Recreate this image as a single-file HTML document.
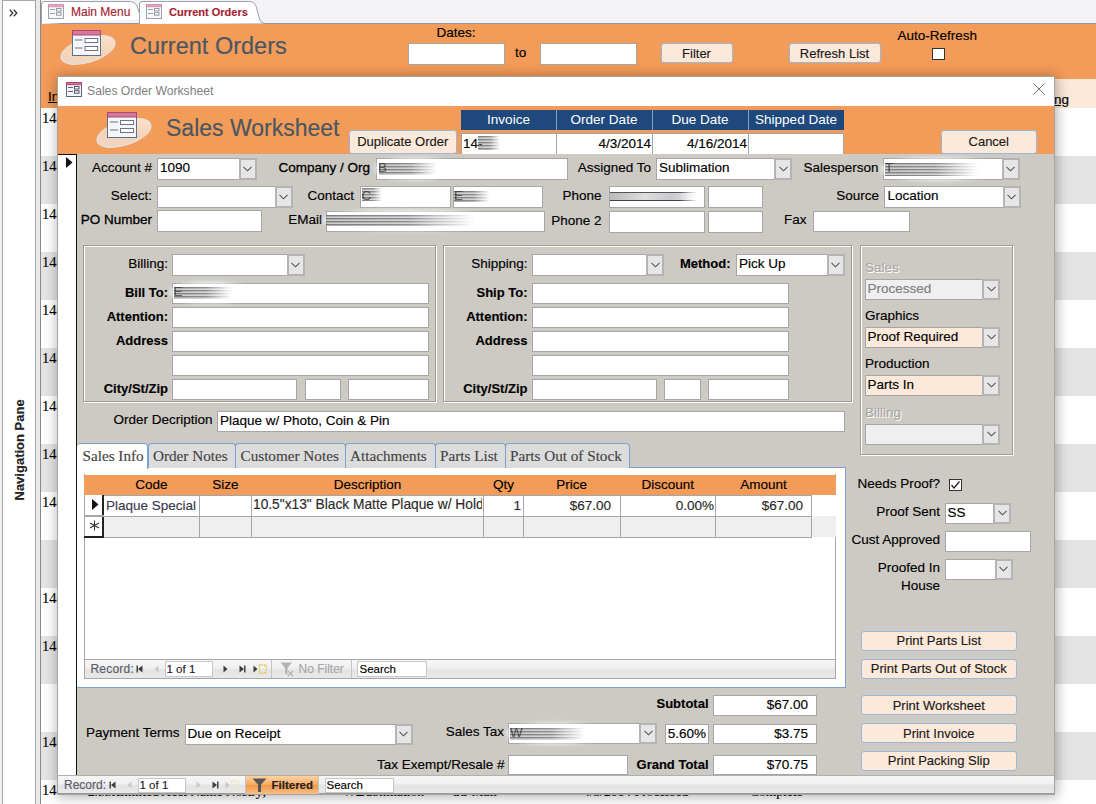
<!DOCTYPE html><html><head><meta charset="utf-8"><style>
html,body{margin:0;padding:0;}
body{width:1096px;height:804px;position:relative;overflow:hidden;background:#fff;font-family:"Liberation Sans",sans-serif;}
div{position:absolute;}
.t{white-space:nowrap;-webkit-text-stroke:0.15px currentColor;}
.n{white-space:nowrap;}
</style></head><body>
<div style="left:41px;top:108px;width:1055px;height:48px;background:#ffffff;"></div>
<div style="left:41px;top:156px;width:1055px;height:48px;background:#e4e4e4;"></div>
<div style="left:41px;top:204px;width:1055px;height:48px;background:#ffffff;"></div>
<div style="left:41px;top:252px;width:1055px;height:48px;background:#e4e4e4;"></div>
<div style="left:41px;top:300px;width:1055px;height:48px;background:#ffffff;"></div>
<div style="left:41px;top:348px;width:1055px;height:48px;background:#e4e4e4;"></div>
<div style="left:41px;top:396px;width:1055px;height:48px;background:#ffffff;"></div>
<div style="left:41px;top:444px;width:1055px;height:48px;background:#e4e4e4;"></div>
<div style="left:41px;top:492px;width:1055px;height:48px;background:#ffffff;"></div>
<div style="left:41px;top:540px;width:1055px;height:48px;background:#e4e4e4;"></div>
<div style="left:41px;top:588px;width:1055px;height:48px;background:#ffffff;"></div>
<div style="left:41px;top:636px;width:1055px;height:48px;background:#e4e4e4;"></div>
<div style="left:41px;top:684px;width:1055px;height:48px;background:#ffffff;"></div>
<div style="left:41px;top:732px;width:1055px;height:48px;background:#e4e4e4;"></div>
<div style="left:41px;top:780px;width:1055px;height:48px;background:#ffffff;"></div>
<div class="t" style="left:42.0px;top:110.86px;width:600px;font-size:14.5px;line-height:14.5px;font-weight:normal;color:#000;font-family:'Liberation Serif', serif;">14-</div>
<div class="t" style="left:42.0px;top:158.86px;width:600px;font-size:14.5px;line-height:14.5px;font-weight:normal;color:#000;font-family:'Liberation Serif', serif;">14-</div>
<div class="t" style="left:42.0px;top:206.86px;width:600px;font-size:14.5px;line-height:14.5px;font-weight:normal;color:#000;font-family:'Liberation Serif', serif;">14-</div>
<div class="t" style="left:42.0px;top:254.86px;width:600px;font-size:14.5px;line-height:14.5px;font-weight:normal;color:#000;font-family:'Liberation Serif', serif;">14-</div>
<div class="t" style="left:42.0px;top:302.86px;width:600px;font-size:14.5px;line-height:14.5px;font-weight:normal;color:#000;font-family:'Liberation Serif', serif;">14-</div>
<div class="t" style="left:42.0px;top:350.86px;width:600px;font-size:14.5px;line-height:14.5px;font-weight:normal;color:#000;font-family:'Liberation Serif', serif;">14-</div>
<div class="t" style="left:42.0px;top:398.86px;width:600px;font-size:14.5px;line-height:14.5px;font-weight:normal;color:#000;font-family:'Liberation Serif', serif;">14-</div>
<div class="t" style="left:42.0px;top:446.86px;width:600px;font-size:14.5px;line-height:14.5px;font-weight:normal;color:#000;font-family:'Liberation Serif', serif;">14-</div>
<div class="t" style="left:42.0px;top:494.86px;width:600px;font-size:14.5px;line-height:14.5px;font-weight:normal;color:#000;font-family:'Liberation Serif', serif;">14-</div>
<div class="t" style="left:42.0px;top:590.86px;width:600px;font-size:14.5px;line-height:14.5px;font-weight:normal;color:#000;font-family:'Liberation Serif', serif;">14-</div>
<div class="t" style="left:42.0px;top:638.86px;width:600px;font-size:14.5px;line-height:14.5px;font-weight:normal;color:#000;font-family:'Liberation Serif', serif;">14-</div>
<div class="t" style="left:42.0px;top:734.86px;width:600px;font-size:14.5px;line-height:14.5px;font-weight:normal;color:#000;font-family:'Liberation Serif', serif;">14-</div>
<div class="t" style="left:42.0px;top:782.86px;width:600px;font-size:14.5px;line-height:14.5px;font-weight:normal;color:#000;font-family:'Liberation Serif', serif;">14-</div>
<div class="t" style="left:88.0px;top:784.69px;width:600px;font-size:13.5px;line-height:13.5px;font-weight:normal;color:#000;font-family:'Liberation Serif', serif;">2xxx</div>
<div class="t" style="left:116.0px;top:784.69px;width:600px;font-size:13.5px;line-height:13.5px;font-weight:normal;color:#000;font-family:'Liberation Serif', serif;">Limited Acct Name Nostry;</div>
<div class="t" style="left:343.0px;top:784.69px;width:600px;font-size:13.5px;line-height:13.5px;font-weight:normal;color:#000;font-family:'Liberation Serif', serif;">W2</div>
<div class="t" style="left:358.0px;top:784.69px;width:600px;font-size:13.5px;line-height:13.5px;font-weight:normal;color:#000;font-family:'Liberation Serif', serif;">Sublimation</div>
<div class="t" style="left:453.0px;top:784.69px;width:600px;font-size:13.5px;line-height:13.5px;font-weight:normal;color:#000;font-family:'Liberation Serif', serif;">SS Mail</div>
<div class="t" style="left:583.0px;top:784.69px;width:600px;font-size:13.5px;line-height:13.5px;font-weight:normal;color:#000;font-family:'Liberation Serif', serif;">4/3/2014 Processed</div>
<div class="t" style="left:750.0px;top:784.69px;width:600px;font-size:13.5px;line-height:13.5px;font-weight:normal;color:#000;font-family:'Liberation Serif', serif;">Complete</div>
<div style="left:41px;top:79px;width:1055px;height:29px;background:#fde9d9;"></div>
<div style="left:41px;top:79px;width:16px;height:29px;background:#f39b58;"></div>
<div class="t" style="left:48.0px;top:89.57px;width:600px;font-size:13.5px;line-height:13.5px;font-weight:normal;color:#000;font-family:'Liberation Sans', sans-serif;"><u>In</u></div>
<div class="t" style="left:1054.0px;top:92.57px;width:600px;font-size:13.5px;line-height:13.5px;font-weight:normal;color:#000;font-family:'Liberation Sans', sans-serif;"><u>ng</u></div>
<div style="left:41px;top:24px;width:1055px;height:55px;background:#f39b58;"></div>
<div style="left:41px;top:0px;width:1055px;height:23px;background:#f3f3f5;"></div>
<div style="left:41px;top:23px;width:1055px;height:1px;background:#8d97a3;"></div>
<div style="left:0px;top:0px;width:41px;height:804px;background:#f0f0f0;"></div>
<div style="left:2px;top:0px;width:34px;height:804px;background:#fff;box-sizing:border-box;border-left:1px solid #a3a3a3;border-right:1px solid #a3a3a3;border-top:1px solid #a8a8a8;"></div>
<div style="left:36px;top:0px;width:5px;height:804px;background:#e9e9e9;box-sizing:border-box;border-right:1px solid #8a8a8a;"></div>
<svg style="position:absolute;left:9px;top:9px" width="9" height="8" viewBox="0 0 9 8"><path d="M0.8 0.8 L3.8 4 L0.8 7.2 M4.8 0.8 L7.8 4 L4.8 7.2" fill="none" stroke="#333" stroke-width="1.3"/></svg>
<div class="t" style="left:-31px;top:443px;width:101px;height:14px;font-size:13px;line-height:14px;font-weight:bold;color:#222;transform:rotate(-90deg);text-align:center;">Navigation Pane</div>
<svg style="position:absolute;left:40px;top:0px" width="225" height="24" viewBox="0 0 225 24"><path d="M1.5 24 L1.5 4 Q1.5 1.5 4 1.5 L89 1.5 Q95 1.5 97 6 L100 15 Q101 18 104 19" fill="#fff" stroke="#9aa3ad" stroke-width="1"/><path d="M99.5 24 L99.5 4 Q99.5 1.5 102 1.5 L209 1.5 Q214 1.5 216 6 L219.5 19 Q221 23 224 23.5" fill="#fff" stroke="#9aa3ad" stroke-width="1"/></svg>
<div style="left:0;top:0;opacity:0.6">
<svg style="position:absolute;left:48px;top:4px" width="16" height="15" viewBox="0 0 16 15"><rect x="0.5" y="0.5" width="15" height="14" fill="#f4f5fa" stroke="#56667e" stroke-width="1"/><rect x="0.5" y="0.5" width="15" height="2.2" fill="#d7709a" stroke="#b8456f" stroke-width="1"/><line x1="2" y1="5.5" x2="7" y2="5.5" stroke="#5a6270" stroke-width="1"/><rect x="8.5" y="4.5" width="4.5" height="2.5" fill="#fff" stroke="#4a5466" stroke-width="1"/><line x1="2" y1="9.5" x2="7" y2="9.5" stroke="#5a6270" stroke-width="1"/><rect x="8.5" y="8.7" width="4.5" height="2.5" fill="#fff" stroke="#4a5466" stroke-width="1"/></svg>
<svg style="position:absolute;left:146px;top:4px" width="16" height="15" viewBox="0 0 16 15"><rect x="0.5" y="0.5" width="15" height="14" fill="#f4f5fa" stroke="#56667e" stroke-width="1"/><rect x="0.5" y="0.5" width="15" height="2.2" fill="#d7709a" stroke="#b8456f" stroke-width="1"/><line x1="2" y1="5.5" x2="7" y2="5.5" stroke="#5a6270" stroke-width="1"/><rect x="8.5" y="4.5" width="4.5" height="2.5" fill="#fff" stroke="#4a5466" stroke-width="1"/><line x1="2" y1="9.5" x2="7" y2="9.5" stroke="#5a6270" stroke-width="1"/><rect x="8.5" y="8.7" width="4.5" height="2.5" fill="#fff" stroke="#4a5466" stroke-width="1"/></svg>
</div>
<div class="t" style="left:71.0px;top:6.34px;width:600px;font-size:12px;line-height:12px;font-weight:normal;color:#a4232f;font-family:'Liberation Sans', sans-serif;">Main Menu</div>
<div class="t" style="left:169.0px;top:7.19px;width:600px;font-size:11px;line-height:11px;font-weight:bold;color:#a4232f;font-family:'Liberation Sans', sans-serif;">Current Orders</div>
<svg style="position:absolute;left:58px;top:29px" width="60" height="40" viewBox="0 0 60 40"><defs><linearGradient id="eg" x1="0" y1="1" x2="1" y2="0"><stop offset="0" stop-color="#ead8cc"/><stop offset="0.5" stop-color="#f7d3b6"/><stop offset="1" stop-color="#fbe6d6"/></linearGradient></defs><ellipse cx="30" cy="21" rx="28" ry="12" transform="rotate(-18 30 21)" fill="url(#eg)" stroke="#e6e0dc" stroke-width="1.4"/></svg>
<svg style="position:absolute;left:72px;top:30px" width="29" height="26" viewBox="0 0 30 26" preserveAspectRatio="none"><rect x="0.5" y="0.5" width="29" height="25" fill="#f4f6fb" stroke="#5c6f8a" stroke-width="1"/><rect x="0.5" y="0.5" width="29" height="4.5" fill="#d3789c" stroke="#b0486f" stroke-width="1"/><line x1="3" y1="10" x2="11" y2="10" stroke="#6d7480" stroke-width="1"/><rect x="13.5" y="8.5" width="13" height="4" fill="#fff" stroke="#6d7480" stroke-width="1"/><line x1="3" y1="18" x2="11" y2="18" stroke="#6d7480" stroke-width="1"/><rect x="13.5" y="16.5" width="13" height="4" fill="#fff" stroke="#6d7480" stroke-width="1"/></svg>
<div class="t" style="left:130.0px;top:34.51px;width:600px;font-size:23.5px;line-height:23.5px;font-weight:normal;color:#4a5662;font-family:'Liberation Sans', sans-serif;">Current Orders</div>
<div class="t" style="left:436.5px;top:25.57px;width:600px;font-size:13.5px;line-height:13.5px;font-weight:normal;color:#000;font-family:'Liberation Sans', sans-serif;">Dates:</div>
<div style="left:408px;top:43px;width:97px;height:21.5px;background:#fff;box-sizing:border-box;border:1px solid #a6a6a6;"></div>
<div class="t" style="left:515.0px;top:45.57px;width:600px;font-size:13.5px;line-height:13.5px;font-weight:normal;color:#000;font-family:'Liberation Sans', sans-serif;">to</div>
<div style="left:540px;top:43px;width:97px;height:21.5px;background:#fff;box-sizing:border-box;border:1px solid #a6a6a6;"></div>
<div style="left:660.5px;top:43px;width:72.0px;height:20px;background:#fde9d9;box-sizing:border-box;border:1px solid #9bb7d9;border-radius:3px;"></div>
<div class="t" style="left:660.5px;text-align:center;top:46.50px;width:72.0px;font-size:13px;line-height:13px;font-weight:normal;color:#1a1a1a;font-family:'Liberation Sans', sans-serif;">Filter</div>
<div style="left:788.5px;top:43px;width:92.0px;height:20px;background:#fde9d9;box-sizing:border-box;border:1px solid #9bb7d9;border-radius:3px;"></div>
<div class="t" style="left:788.5px;text-align:center;top:46.50px;width:92.0px;font-size:13px;line-height:13px;font-weight:normal;color:#1a1a1a;font-family:'Liberation Sans', sans-serif;">Refresh List</div>
<div class="t" style="left:897.5px;top:29.37px;width:600px;font-size:13.5px;line-height:13.5px;font-weight:normal;color:#000;font-family:'Liberation Sans', sans-serif;">Auto-Refresh</div>
<div style="left:932px;top:48px;width:13px;height:12px;background:#fff;box-sizing:border-box;border:1px solid #333;"></div>
<div style="left:57px;top:76px;width:998px;height:719px;background:#cdcac4;box-shadow:1px 1px 12px 1px rgba(0,0,0,0.3);box-sizing:border-box;border:1px solid #a7a39f;"></div>
<div style="left:58px;top:77px;width:996px;height:29px;background:#fff;"></div>
<svg style="position:absolute;left:66px;top:82px" width="16" height="15" viewBox="0 0 16 15"><rect x="0.5" y="0.5" width="15" height="14" fill="#f4f5fa" stroke="#56667e" stroke-width="1"/><rect x="0.5" y="0.5" width="15" height="2.2" fill="#d7709a" stroke="#b8456f" stroke-width="1"/><line x1="2" y1="5.5" x2="7" y2="5.5" stroke="#5a6270" stroke-width="1"/><rect x="8.5" y="4.5" width="4.5" height="2.5" fill="#fff" stroke="#4a5466" stroke-width="1"/><line x1="2" y1="9.5" x2="7" y2="9.5" stroke="#5a6270" stroke-width="1"/><rect x="8.5" y="8.7" width="4.5" height="2.5" fill="#fff" stroke="#4a5466" stroke-width="1"/></svg>
<div class="n" style="left:87.0px;top:84.67px;width:600px;font-size:12.2px;line-height:12.2px;font-weight:normal;color:#7e7e7e;font-family:'Liberation Sans', sans-serif;">Sales Order Worksheet</div>
<svg style="position:absolute;left:1033px;top:83px" width="12" height="12" viewBox="0 0 12 12"><path d="M0.5 0.5 L11.5 11.5 M11.5 0.5 L0.5 11.5" stroke="#777" stroke-width="1"/></svg>
<div style="left:58px;top:106px;width:996px;height:48px;background:#f39b58;"></div>
<svg style="position:absolute;left:94px;top:112px" width="60" height="40" viewBox="0 0 60 40"><ellipse cx="30" cy="21" rx="28" ry="12" transform="rotate(-18 30 21)" fill="url(#eg)" stroke="#e6e0dc" stroke-width="1.4"/></svg>
<svg style="position:absolute;left:107px;top:112px" width="30" height="26" viewBox="0 0 30 26" preserveAspectRatio="none"><rect x="0.5" y="0.5" width="29" height="25" fill="#f4f6fb" stroke="#5c6f8a" stroke-width="1"/><rect x="0.5" y="0.5" width="29" height="4.5" fill="#d3789c" stroke="#b0486f" stroke-width="1"/><line x1="3" y1="10" x2="11" y2="10" stroke="#6d7480" stroke-width="1"/><rect x="13.5" y="8.5" width="13" height="4" fill="#fff" stroke="#6d7480" stroke-width="1"/><line x1="3" y1="18" x2="11" y2="18" stroke="#6d7480" stroke-width="1"/><rect x="13.5" y="16.5" width="13" height="4" fill="#fff" stroke="#6d7480" stroke-width="1"/></svg>
<div class="t" style="left:166.0px;top:116.93px;width:600px;font-size:23px;line-height:23px;font-weight:normal;color:#4a5662;font-family:'Liberation Sans', sans-serif;">Sales Worksheet</div>
<div style="left:348.5px;top:130px;width:108.5px;height:23.5px;background:#fde9d9;box-sizing:border-box;border:1px solid #9bb7d9;border-radius:3px;"></div>
<div class="t" style="left:348.5px;text-align:center;top:135.25px;width:108.5px;font-size:13px;line-height:13px;font-weight:normal;color:#1a1a1a;font-family:'Liberation Sans', sans-serif;">Duplicate Order</div>
<div style="left:461px;top:110px;width:383px;height:20px;background:#1f497d;"></div>
<div class="n" style="left:460.5px;text-align:center;top:113.07px;width:96px;font-size:13.5px;line-height:13.5px;font-weight:normal;color:#fff;font-family:'Liberation Sans', sans-serif;">Invoice</div>
<div style="left:556px;top:110px;width:1px;height:20px;background:#8aa2c0;"></div>
<div class="n" style="left:556.0px;text-align:center;top:113.07px;width:96px;font-size:13.5px;line-height:13.5px;font-weight:normal;color:#fff;font-family:'Liberation Sans', sans-serif;">Order Date</div>
<div style="left:652px;top:110px;width:1px;height:20px;background:#8aa2c0;"></div>
<div class="n" style="left:652.0px;text-align:center;top:113.07px;width:96px;font-size:13.5px;line-height:13.5px;font-weight:normal;color:#fff;font-family:'Liberation Sans', sans-serif;">Due Date</div>
<div style="left:748px;top:110px;width:1px;height:20px;background:#8aa2c0;"></div>
<div class="n" style="left:748.0px;text-align:center;top:113.07px;width:96px;font-size:13.5px;line-height:13.5px;font-weight:normal;color:#fff;font-family:'Liberation Sans', sans-serif;">Shipped Date</div>
<div style="left:461px;top:133px;width:383px;height:21px;background:#fff;box-sizing:border-box;border:1px solid #a6a6a6;border-bottom:none;"></div>
<div style="left:556px;top:133px;width:1px;height:21px;background:#a6a6a6;"></div>
<div style="left:652px;top:133px;width:1px;height:21px;background:#a6a6a6;"></div>
<div style="left:748px;top:133px;width:1px;height:21px;background:#a6a6a6;"></div>
<div class="t" style="left:463.0px;top:136.57px;width:600px;font-size:13.5px;line-height:13.5px;font-weight:normal;color:#000;font-family:'Liberation Sans', sans-serif;">14-</div>
<div class="t" style="left:561.0px;text-align:right;top:136.57px;width:90px;font-size:13.5px;line-height:13.5px;font-weight:normal;color:#000;font-family:'Liberation Sans', sans-serif;">4/3/2014</div>
<div class="t" style="left:657.0px;text-align:right;top:136.57px;width:90px;font-size:13.5px;line-height:13.5px;font-weight:normal;color:#000;font-family:'Liberation Sans', sans-serif;">4/16/2014</div>
<div style="left:940.5px;top:129.5px;width:96.5px;height:24.0px;background:#fde9d9;box-sizing:border-box;border:1px solid #9bb7d9;border-radius:3px;"></div>
<div class="t" style="left:940.5px;text-align:center;top:135.00px;width:96.5px;font-size:13px;line-height:13px;font-weight:normal;color:#1a1a1a;font-family:'Liberation Sans', sans-serif;">Cancel</div>
<div style="left:58px;top:154px;width:19px;height:621px;background:#fff;box-sizing:border-box;border-right:1px solid #111;border-top:1px solid #111;"></div>
<svg style="position:absolute;left:66px;top:157px" width="7" height="11" viewBox="0 0 7 11"><path d="M0 0 L6.5 5.5 L0 11 Z" fill="#111"/></svg>
<div class="t" style="left:-48.0px;text-align:right;top:160.57px;width:200px;font-size:13.5px;line-height:13.5px;font-weight:normal;color:#000;font-family:'Liberation Sans', sans-serif;">Account #</div>
<div style="left:157px;top:158px;width:99.5px;height:22px;background:#fff;box-sizing:border-box;border:1px solid #a6a6a6;"></div>
<div style="left:238.5px;top:158px;width:18.0px;height:22px;background:#e6e6e6;box-sizing:border-box;border:2px solid #b4b4b4;"><svg width="9" height="6" viewBox="0 0 9 6" style="position:absolute;left:50%;top:50%;margin-left:-4.5px;margin-top:-3px"><path d="M0.5 0.8 L4.5 4.8 L8.5 0.8" fill="none" stroke="#555" stroke-width="1.1"/></svg></div>
<div class="t" style="left:160.0px;top:161.07px;width:600px;font-size:13.5px;line-height:13.5px;font-weight:normal;color:#000;font-family:'Liberation Sans', sans-serif;">1090</div>
<div class="t" style="left:170.0px;text-align:right;top:160.57px;width:200px;font-size:13.5px;line-height:13.5px;font-weight:normal;color:#000;font-family:'Liberation Sans', sans-serif;-webkit-text-stroke:0.3px #000;">Company / Org</div>
<div style="left:376px;top:158px;width:192px;height:22px;background:#fff;box-sizing:border-box;border:1px solid #a6a6a6;"></div>
<div class="t" style="left:451.0px;text-align:right;top:160.57px;width:200px;font-size:13.5px;line-height:13.5px;font-weight:normal;color:#000;font-family:'Liberation Sans', sans-serif;">Assigned To</div>
<div style="left:655.5px;top:158px;width:136.5px;height:22px;background:#fff;box-sizing:border-box;border:1px solid #a6a6a6;"></div>
<div style="left:774px;top:158px;width:18px;height:22px;background:#e6e6e6;box-sizing:border-box;border:2px solid #b4b4b4;"><svg width="9" height="6" viewBox="0 0 9 6" style="position:absolute;left:50%;top:50%;margin-left:-4.5px;margin-top:-3px"><path d="M0.5 0.8 L4.5 4.8 L8.5 0.8" fill="none" stroke="#555" stroke-width="1.1"/></svg></div>
<div class="t" style="left:659.0px;top:161.07px;width:600px;font-size:13.5px;line-height:13.5px;font-weight:normal;color:#000;font-family:'Liberation Sans', sans-serif;">Sublimation</div>
<div class="t" style="left:678.5px;text-align:right;top:160.57px;width:200px;font-size:13.5px;line-height:13.5px;font-weight:normal;color:#000;font-family:'Liberation Sans', sans-serif;">Salesperson</div>
<div style="left:883px;top:158px;width:136.5px;height:22px;background:#fff;box-sizing:border-box;border:1px solid #a6a6a6;"></div>
<div style="left:1001.5px;top:158px;width:18.0px;height:22px;background:#e6e6e6;box-sizing:border-box;border:2px solid #b4b4b4;"><svg width="9" height="6" viewBox="0 0 9 6" style="position:absolute;left:50%;top:50%;margin-left:-4.5px;margin-top:-3px"><path d="M0.5 0.8 L4.5 4.8 L8.5 0.8" fill="none" stroke="#555" stroke-width="1.1"/></svg></div>
<div class="t" style="left:-48.0px;text-align:right;top:188.57px;width:200px;font-size:13.5px;line-height:13.5px;font-weight:normal;color:#000;font-family:'Liberation Sans', sans-serif;">Select:</div>
<div style="left:156.5px;top:186px;width:136.0px;height:21.5px;background:#fff;box-sizing:border-box;border:1px solid #a6a6a6;"></div>
<div style="left:274.5px;top:186px;width:18.0px;height:21.5px;background:#e6e6e6;box-sizing:border-box;border:2px solid #b4b4b4;"><svg width="9" height="6" viewBox="0 0 9 6" style="position:absolute;left:50%;top:50%;margin-left:-4.5px;margin-top:-3px"><path d="M0.5 0.8 L4.5 4.8 L8.5 0.8" fill="none" stroke="#555" stroke-width="1.1"/></svg></div>
<div class="t" style="left:154.0px;text-align:right;top:188.57px;width:200px;font-size:13.5px;line-height:13.5px;font-weight:normal;color:#000;font-family:'Liberation Sans', sans-serif;">Contact</div>
<div style="left:360px;top:186px;width:90.5px;height:21.5px;background:#fff;box-sizing:border-box;border:1px solid #a6a6a6;"></div>
<div style="left:452.5px;top:186px;width:90.0px;height:21.5px;background:#fff;box-sizing:border-box;border:1px solid #a6a6a6;"></div>
<div class="t" style="left:401.5px;text-align:right;top:188.57px;width:200px;font-size:13.5px;line-height:13.5px;font-weight:normal;color:#000;font-family:'Liberation Sans', sans-serif;">Phone</div>
<div style="left:608.5px;top:186px;width:96.0px;height:21.5px;background:#fff;box-sizing:border-box;border:1px solid #a6a6a6;"></div>
<div style="left:708px;top:186px;width:55px;height:21.5px;background:#fff;box-sizing:border-box;border:1px solid #a6a6a6;"></div>
<div class="t" style="left:679.0px;text-align:right;top:188.57px;width:200px;font-size:13.5px;line-height:13.5px;font-weight:normal;color:#000;font-family:'Liberation Sans', sans-serif;">Source</div>
<div style="left:884px;top:186px;width:136.5px;height:21.5px;background:#fff;box-sizing:border-box;border:1px solid #a6a6a6;"></div>
<div style="left:1002.5px;top:186px;width:18.0px;height:21.5px;background:#e6e6e6;box-sizing:border-box;border:2px solid #b4b4b4;"><svg width="9" height="6" viewBox="0 0 9 6" style="position:absolute;left:50%;top:50%;margin-left:-4.5px;margin-top:-3px"><path d="M0.5 0.8 L4.5 4.8 L8.5 0.8" fill="none" stroke="#555" stroke-width="1.1"/></svg></div>
<div class="t" style="left:887.5px;top:189.07px;width:600px;font-size:13.5px;line-height:13.5px;font-weight:normal;color:#000;font-family:'Liberation Sans', sans-serif;">Location</div>
<div class="t" style="left:-48.0px;text-align:right;top:212.57px;width:200px;font-size:13.5px;line-height:13.5px;font-weight:normal;color:#000;font-family:'Liberation Sans', sans-serif;-webkit-text-stroke:0.3px #000;">PO Number</div>
<div style="left:157px;top:210px;width:105px;height:21.5px;background:#fff;box-sizing:border-box;border:1px solid #a6a6a6;"></div>
<div class="t" style="left:122.0px;text-align:right;top:212.57px;width:200px;font-size:13.5px;line-height:13.5px;font-weight:normal;color:#000;font-family:'Liberation Sans', sans-serif;">EMail</div>
<div style="left:325.5px;top:210.5px;width:219.5px;height:21.0px;background:#fff;box-sizing:border-box;border:1px solid #a6a6a6;"></div>
<div class="t" style="left:401.5px;text-align:right;top:213.57px;width:200px;font-size:13.5px;line-height:13.5px;font-weight:normal;color:#000;font-family:'Liberation Sans', sans-serif;">Phone 2</div>
<div style="left:608.5px;top:211px;width:96.0px;height:21.5px;background:#fff;box-sizing:border-box;border:1px solid #a6a6a6;"></div>
<div style="left:708px;top:211px;width:55px;height:21.5px;background:#fff;box-sizing:border-box;border:1px solid #a6a6a6;"></div>
<div class="t" style="left:606.5px;text-align:right;top:212.57px;width:200px;font-size:13.5px;line-height:13.5px;font-weight:normal;color:#000;font-family:'Liberation Sans', sans-serif;">Fax</div>
<div style="left:813px;top:210.5px;width:97px;height:21.0px;background:#fff;box-sizing:border-box;border:1px solid #a6a6a6;"></div>
<div style="left:84px;top:246px;width:353px;height:157px;box-sizing:border-box;border:1px solid #fff;"></div>
<div style="left:83px;top:245px;width:353px;height:157px;box-sizing:border-box;border:1px solid #a09d98;"></div>
<div style="left:444px;top:246px;width:409px;height:157px;box-sizing:border-box;border:1px solid #fff;"></div>
<div style="left:443px;top:245px;width:409px;height:157px;box-sizing:border-box;border:1px solid #a09d98;"></div>
<div style="left:861px;top:246px;width:153px;height:210px;box-sizing:border-box;border:1px solid #fff;"></div>
<div style="left:860px;top:245px;width:153px;height:210px;box-sizing:border-box;border:1px solid #a09d98;"></div>
<div class="t" style="left:-32.0px;text-align:right;top:256.57px;width:200px;font-size:13.5px;line-height:13.5px;font-weight:normal;color:#000;font-family:'Liberation Sans', sans-serif;">Billing:</div>
<div style="left:172px;top:254px;width:132.5px;height:21.5px;background:#fff;box-sizing:border-box;border:1px solid #a6a6a6;"></div>
<div style="left:286.5px;top:254px;width:18.0px;height:21.5px;background:#e6e6e6;box-sizing:border-box;border:2px solid #b4b4b4;"><svg width="9" height="6" viewBox="0 0 9 6" style="position:absolute;left:50%;top:50%;margin-left:-4.5px;margin-top:-3px"><path d="M0.5 0.8 L4.5 4.8 L8.5 0.8" fill="none" stroke="#555" stroke-width="1.1"/></svg></div>
<div class="t" style="left:-32.0px;text-align:right;top:285.50px;width:200px;font-size:13px;line-height:13px;font-weight:bold;color:#000;font-family:'Liberation Sans', sans-serif;">Bill To:</div>
<div style="left:172px;top:282.5px;width:256.5px;height:21.0px;background:#fff;box-sizing:border-box;border:1px solid #a6a6a6;"></div>
<div class="t" style="left:-32.0px;text-align:right;top:309.50px;width:200px;font-size:13px;line-height:13px;font-weight:bold;color:#000;font-family:'Liberation Sans', sans-serif;">Attention:</div>
<div style="left:172px;top:306.5px;width:256.5px;height:21.0px;background:#fff;box-sizing:border-box;border:1px solid #a6a6a6;"></div>
<div class="t" style="left:-32.0px;text-align:right;top:333.50px;width:200px;font-size:13px;line-height:13px;font-weight:bold;color:#000;font-family:'Liberation Sans', sans-serif;">Address</div>
<div style="left:172px;top:330.5px;width:256.5px;height:21.0px;background:#fff;box-sizing:border-box;border:1px solid #a6a6a6;"></div>
<div style="left:172px;top:354.5px;width:256.5px;height:21.0px;background:#fff;box-sizing:border-box;border:1px solid #a6a6a6;"></div>
<div class="t" style="left:-32.0px;text-align:right;top:381.50px;width:200px;font-size:13px;line-height:13px;font-weight:bold;color:#000;font-family:'Liberation Sans', sans-serif;">City/St/Zip</div>
<div style="left:172px;top:378.5px;width:124.5px;height:21.0px;background:#fff;box-sizing:border-box;border:1px solid #a6a6a6;"></div>
<div style="left:304.5px;top:378.5px;width:36.0px;height:21.0px;background:#fff;box-sizing:border-box;border:1px solid #a6a6a6;"></div>
<div style="left:348px;top:378.5px;width:80.5px;height:21.0px;background:#fff;box-sizing:border-box;border:1px solid #a6a6a6;"></div>
<div class="t" style="left:327.5px;text-align:right;top:256.57px;width:200px;font-size:13.5px;line-height:13.5px;font-weight:normal;color:#000;font-family:'Liberation Sans', sans-serif;">Shipping:</div>
<div style="left:532px;top:254px;width:132px;height:21.5px;background:#fff;box-sizing:border-box;border:1px solid #a6a6a6;"></div>
<div style="left:646px;top:254px;width:18px;height:21.5px;background:#e6e6e6;box-sizing:border-box;border:2px solid #b4b4b4;"><svg width="9" height="6" viewBox="0 0 9 6" style="position:absolute;left:50%;top:50%;margin-left:-4.5px;margin-top:-3px"><path d="M0.5 0.8 L4.5 4.8 L8.5 0.8" fill="none" stroke="#555" stroke-width="1.1"/></svg></div>
<div class="t" style="left:530.5px;text-align:right;top:257.00px;width:200px;font-size:13px;line-height:13px;font-weight:bold;color:#000;font-family:'Liberation Sans', sans-serif;">Method:</div>
<div style="left:735.5px;top:254px;width:109.0px;height:21.5px;background:#fff;box-sizing:border-box;border:1px solid #a6a6a6;"></div>
<div style="left:826.5px;top:254px;width:18.0px;height:21.5px;background:#e6e6e6;box-sizing:border-box;border:2px solid #b4b4b4;"><svg width="9" height="6" viewBox="0 0 9 6" style="position:absolute;left:50%;top:50%;margin-left:-4.5px;margin-top:-3px"><path d="M0.5 0.8 L4.5 4.8 L8.5 0.8" fill="none" stroke="#555" stroke-width="1.1"/></svg></div>
<div class="t" style="left:739.0px;top:257.07px;width:600px;font-size:13.5px;line-height:13.5px;font-weight:normal;color:#000;font-family:'Liberation Sans', sans-serif;">Pick Up</div>
<div class="t" style="left:327.5px;text-align:right;top:285.50px;width:200px;font-size:13px;line-height:13px;font-weight:bold;color:#000;font-family:'Liberation Sans', sans-serif;">Ship To:</div>
<div style="left:532px;top:282.5px;width:256.5px;height:21.0px;background:#fff;box-sizing:border-box;border:1px solid #a6a6a6;"></div>
<div class="t" style="left:327.5px;text-align:right;top:309.50px;width:200px;font-size:13px;line-height:13px;font-weight:bold;color:#000;font-family:'Liberation Sans', sans-serif;">Attention:</div>
<div style="left:532px;top:306.5px;width:256.5px;height:21.0px;background:#fff;box-sizing:border-box;border:1px solid #a6a6a6;"></div>
<div class="t" style="left:327.5px;text-align:right;top:333.50px;width:200px;font-size:13px;line-height:13px;font-weight:bold;color:#000;font-family:'Liberation Sans', sans-serif;">Address</div>
<div style="left:532px;top:330.5px;width:256.5px;height:21.0px;background:#fff;box-sizing:border-box;border:1px solid #a6a6a6;"></div>
<div style="left:532px;top:354.5px;width:256.5px;height:21.0px;background:#fff;box-sizing:border-box;border:1px solid #a6a6a6;"></div>
<div class="t" style="left:327.5px;text-align:right;top:381.50px;width:200px;font-size:13px;line-height:13px;font-weight:bold;color:#000;font-family:'Liberation Sans', sans-serif;">City/St/Zip</div>
<div style="left:532px;top:378.5px;width:124.5px;height:21.0px;background:#fff;box-sizing:border-box;border:1px solid #a6a6a6;"></div>
<div style="left:664px;top:378.5px;width:36.5px;height:21.0px;background:#fff;box-sizing:border-box;border:1px solid #a6a6a6;"></div>
<div style="left:708px;top:378.5px;width:80.5px;height:21.0px;background:#fff;box-sizing:border-box;border:1px solid #a6a6a6;"></div>
<div class="t" style="left:866.0px;top:261.57px;width:600px;font-size:13.5px;line-height:13.5px;font-weight:normal;color:#fff;font-family:'Liberation Sans', sans-serif;">Sales</div>
<div class="t" style="left:865.0px;top:260.57px;width:600px;font-size:13.5px;line-height:13.5px;font-weight:normal;color:#a9a7a3;font-family:'Liberation Sans', sans-serif;">Sales</div>
<div style="left:864.5px;top:278.5px;width:135.5px;height:21.0px;background:#efefef;box-sizing:border-box;border:1px solid #a6a6a6;"></div>
<div style="left:982px;top:278.5px;width:18px;height:21.0px;background:#e6e6e6;box-sizing:border-box;border:2px solid #b4b4b4;"><svg width="9" height="6" viewBox="0 0 9 6" style="position:absolute;left:50%;top:50%;margin-left:-4.5px;margin-top:-3px"><path d="M0.5 0.8 L4.5 4.8 L8.5 0.8" fill="none" stroke="#555" stroke-width="1.1"/></svg></div>
<div class="t" style="left:867.5px;top:281.57px;width:600px;font-size:13.5px;line-height:13.5px;font-weight:normal;color:#7d7d7d;font-family:'Liberation Sans', sans-serif;">Processed</div>
<div class="t" style="left:865.0px;top:309.07px;width:600px;font-size:13.5px;line-height:13.5px;font-weight:normal;color:#000;font-family:'Liberation Sans', sans-serif;">Graphics</div>
<div style="left:864.5px;top:326.5px;width:135.5px;height:21.0px;background:#fde9d9;box-sizing:border-box;border:1px solid #a6a6a6;"></div>
<div style="left:982px;top:326.5px;width:18px;height:21.0px;background:#e6e6e6;box-sizing:border-box;border:2px solid #b4b4b4;"><svg width="9" height="6" viewBox="0 0 9 6" style="position:absolute;left:50%;top:50%;margin-left:-4.5px;margin-top:-3px"><path d="M0.5 0.8 L4.5 4.8 L8.5 0.8" fill="none" stroke="#555" stroke-width="1.1"/></svg></div>
<div class="t" style="left:867.5px;top:329.57px;width:600px;font-size:13.5px;line-height:13.5px;font-weight:normal;color:#000;font-family:'Liberation Sans', sans-serif;">Proof Required</div>
<div class="t" style="left:865.0px;top:357.07px;width:600px;font-size:13.5px;line-height:13.5px;font-weight:normal;color:#000;font-family:'Liberation Sans', sans-serif;">Production</div>
<div style="left:864.5px;top:374.5px;width:135.5px;height:21.0px;background:#fde9d9;box-sizing:border-box;border:1px solid #a6a6a6;"></div>
<div style="left:982px;top:374.5px;width:18px;height:21.0px;background:#e6e6e6;box-sizing:border-box;border:2px solid #b4b4b4;"><svg width="9" height="6" viewBox="0 0 9 6" style="position:absolute;left:50%;top:50%;margin-left:-4.5px;margin-top:-3px"><path d="M0.5 0.8 L4.5 4.8 L8.5 0.8" fill="none" stroke="#555" stroke-width="1.1"/></svg></div>
<div class="t" style="left:867.5px;top:377.57px;width:600px;font-size:13.5px;line-height:13.5px;font-weight:normal;color:#000;font-family:'Liberation Sans', sans-serif;">Parts In</div>
<div class="t" style="left:866.0px;top:406.57px;width:600px;font-size:13.5px;line-height:13.5px;font-weight:normal;color:#fff;font-family:'Liberation Sans', sans-serif;">Billing</div>
<div class="t" style="left:865.0px;top:405.57px;width:600px;font-size:13.5px;line-height:13.5px;font-weight:normal;color:#a9a7a3;font-family:'Liberation Sans', sans-serif;">Billing</div>
<div style="left:864.5px;top:423.5px;width:135.5px;height:21.0px;background:#efefef;box-sizing:border-box;border:1px solid #a6a6a6;"></div>
<div style="left:982px;top:423.5px;width:18px;height:21.0px;background:#e6e6e6;box-sizing:border-box;border:2px solid #b4b4b4;"><svg width="9" height="6" viewBox="0 0 9 6" style="position:absolute;left:50%;top:50%;margin-left:-4.5px;margin-top:-3px"><path d="M0.5 0.8 L4.5 4.8 L8.5 0.8" fill="none" stroke="#555" stroke-width="1.1"/></svg></div>
<div class="t" style="left:12.5px;text-align:right;top:413.07px;width:200px;font-size:13.5px;line-height:13.5px;font-weight:normal;color:#000;font-family:'Liberation Sans', sans-serif;">Order Decription</div>
<div style="left:217px;top:410.5px;width:628px;height:21.0px;background:#fff;box-sizing:border-box;border:1px solid #a6a6a6;"></div>
<div class="t" style="left:220.0px;top:413.57px;width:600px;font-size:13.5px;line-height:13.5px;font-weight:normal;color:#000;font-family:'Liberation Sans', sans-serif;">Plaque w/ Photo, Coin &amp; Pin</div>
<div style="left:77px;top:468px;width:769px;height:220px;background:#fff;box-sizing:border-box;border-right:1px solid #7ba1d6;border-bottom:1px solid #7ba1d6;"></div>
<div style="left:77px;top:467px;width:769px;height:1px;background:#7ba1d6;"></div>
<div style="left:77px;top:442.5px;width:70.5px;height:26.5px;background:#fff;box-sizing:border-box;border-top:1px solid #7ba1d6;border-right:1px solid #7ba1d6;border-radius:4px 4px 0 0;"></div>
<div class="t" style="left:82.5px;top:448.27px;width:600px;font-size:15.2px;line-height:15.2px;font-weight:normal;color:#444;font-family:'Liberation Serif', serif;">Sales Info</div>
<div style="left:147.5px;top:442.5px;width:88.5px;height:25.5px;background:#dcdcdc;box-sizing:border-box;border:1px solid #7ba1d6;border-bottom:none;border-radius:4px 4px 0 0;"></div>
<div class="t" style="left:153.0px;top:448.27px;width:600px;font-size:15.2px;line-height:15.2px;font-weight:normal;color:#444;font-family:'Liberation Serif', serif;">Order Notes</div>
<div style="left:235px;top:442.5px;width:110.5px;height:25.5px;background:#dcdcdc;box-sizing:border-box;border:1px solid #7ba1d6;border-bottom:none;border-radius:4px 4px 0 0;"></div>
<div class="t" style="left:240.5px;top:448.27px;width:600px;font-size:15.2px;line-height:15.2px;font-weight:normal;color:#444;font-family:'Liberation Serif', serif;">Customer Notes</div>
<div style="left:344.5px;top:442.5px;width:91.0px;height:25.5px;background:#dcdcdc;box-sizing:border-box;border:1px solid #7ba1d6;border-bottom:none;border-radius:4px 4px 0 0;"></div>
<div class="t" style="left:350.0px;top:448.27px;width:600px;font-size:15.2px;line-height:15.2px;font-weight:normal;color:#444;font-family:'Liberation Serif', serif;">Attachments</div>
<div style="left:434.5px;top:442.5px;width:71.0px;height:25.5px;background:#dcdcdc;box-sizing:border-box;border:1px solid #7ba1d6;border-bottom:none;border-radius:4px 4px 0 0;"></div>
<div class="t" style="left:440.0px;top:448.27px;width:600px;font-size:15.2px;line-height:15.2px;font-weight:normal;color:#444;font-family:'Liberation Serif', serif;">Parts List</div>
<div style="left:504.5px;top:442.5px;width:125.5px;height:25.5px;background:#dcdcdc;box-sizing:border-box;border:1px solid #7ba1d6;border-bottom:none;border-radius:4px 4px 0 0;"></div>
<div class="t" style="left:510.0px;top:448.27px;width:600px;font-size:15.2px;line-height:15.2px;font-weight:normal;color:#444;font-family:'Liberation Serif', serif;">Parts Out of Stock</div>
<div style="left:84px;top:474px;width:752px;height:205px;background:#fff;box-sizing:border-box;border-left:1px solid #a6a6a6;border-right:1px solid #a6a6a6;"></div>
<div style="left:84px;top:474.5px;width:752px;height:20.5px;background:#f39b58;"></div>
<div class="t" style="left:103.5px;text-align:center;top:477.57px;width:96.0px;font-size:13.5px;line-height:13.5px;font-weight:normal;color:#000;font-family:'Liberation Sans', sans-serif;">Code</div>
<div class="t" style="left:199.5px;text-align:center;top:477.57px;width:52.0px;font-size:13.5px;line-height:13.5px;font-weight:normal;color:#000;font-family:'Liberation Sans', sans-serif;">Size</div>
<div class="t" style="left:251.5px;text-align:center;top:477.57px;width:232.0px;font-size:13.5px;line-height:13.5px;font-weight:normal;color:#000;font-family:'Liberation Sans', sans-serif;">Description</div>
<div class="t" style="left:483.5px;text-align:center;top:477.57px;width:40.0px;font-size:13.5px;line-height:13.5px;font-weight:normal;color:#000;font-family:'Liberation Sans', sans-serif;">Qty</div>
<div class="t" style="left:523.5px;text-align:center;top:477.57px;width:96.5px;font-size:13.5px;line-height:13.5px;font-weight:normal;color:#000;font-family:'Liberation Sans', sans-serif;">Price</div>
<div class="t" style="left:620.0px;text-align:center;top:477.57px;width:95.5px;font-size:13.5px;line-height:13.5px;font-weight:normal;color:#000;font-family:'Liberation Sans', sans-serif;">Discount</div>
<div class="t" style="left:715.5px;text-align:center;top:477.57px;width:96.0px;font-size:13.5px;line-height:13.5px;font-weight:normal;color:#000;font-family:'Liberation Sans', sans-serif;">Amount</div>
<div style="left:84px;top:495px;width:752px;height:21px;background:#fff;"></div>
<div style="left:84px;top:516px;width:752px;height:21px;background:#efefef;"></div>
<div style="left:84px;top:495px;width:728px;height:1px;background:#a6a6a6;"></div>
<div style="left:84px;top:516px;width:728px;height:1px;background:#a6a6a6;"></div>
<div style="left:84px;top:537px;width:728px;height:1px;background:#a6a6a6;"></div>
<div style="left:103px;top:495px;width:1px;height:42px;background:#a6a6a6;"></div>
<div style="left:199px;top:495px;width:1px;height:42px;background:#a6a6a6;"></div>
<div style="left:251px;top:495px;width:1px;height:42px;background:#a6a6a6;"></div>
<div style="left:483px;top:495px;width:1px;height:42px;background:#a6a6a6;"></div>
<div style="left:523px;top:495px;width:1px;height:42px;background:#a6a6a6;"></div>
<div style="left:620px;top:495px;width:1px;height:42px;background:#a6a6a6;"></div>
<div style="left:715px;top:495px;width:1px;height:42px;background:#a6a6a6;"></div>
<div style="left:811px;top:495px;width:1px;height:42px;background:#a6a6a6;"></div>
<div style="left:84px;top:495px;width:20px;height:42px;background:#fff;box-sizing:border-box;border-right:2px solid #222;border-left:1px solid #a6a6a6;"></div>
<div style="left:84px;top:515px;width:20px;height:2px;background:#a6a6a6;"></div>
<div style="left:84px;top:536px;width:20px;height:2px;background:#222;"></div>
<svg style="position:absolute;left:92px;top:499px" width="7" height="11" viewBox="0 0 7 11"><path d="M0 0 L6.5 5.5 L0 11 Z" fill="#111"/></svg>
<svg style="position:absolute;left:89px;top:520px" width="11" height="11" viewBox="0 0 11 11"><path d="M5.5 0.5 V10.5 M1 3 L10 8 M10 3 L1 8" stroke="#333" stroke-width="1.1"/></svg>
<div class="t" style="left:106.0px;top:498.57px;width:600px;font-size:13.5px;line-height:13.5px;font-weight:normal;color:#3a3a4a;font-family:'Liberation Sans', sans-serif;">Plaque Special</div>
<div class="t" style="left:253.0px;top:498.36px;width:600px;font-size:13.75px;line-height:13.75px;font-weight:normal;color:#2b2b2b;font-family:'Liberation Sans', sans-serif;overflow:hidden;width:229px;">10.5"x13" Black Matte Plaque w/ Hold</div>
<div class="t" style="left:491.0px;text-align:right;top:498.57px;width:30px;font-size:13.5px;line-height:13.5px;font-weight:normal;color:#2b2b2b;font-family:'Liberation Sans', sans-serif;">1</div>
<div class="t" style="left:531.0px;text-align:right;top:498.57px;width:80px;font-size:13.5px;line-height:13.5px;font-weight:normal;color:#2b2b2b;font-family:'Liberation Sans', sans-serif;">$67.00</div>
<div class="t" style="left:634.0px;text-align:right;top:498.57px;width:80px;font-size:13.5px;line-height:13.5px;font-weight:normal;color:#2b2b2b;font-family:'Liberation Sans', sans-serif;">0.00%</div>
<div class="t" style="left:723.0px;text-align:right;top:498.57px;width:80px;font-size:13.5px;line-height:13.5px;font-weight:normal;color:#2b2b2b;font-family:'Liberation Sans', sans-serif;">$67.00</div>
<div style="left:84px;top:659px;width:752px;height:20px;background:linear-gradient(#f6f6f6,#f0f0f0 45%,#e4e4e4 55%,#e8e8e8);box-sizing:border-box;border-top:1px solid #a6a6a6;border-bottom:1px solid #a6a6a6;"></div>
<div style="left:84px;top:659px;width:1px;height:20px;background:#a6a6a6;"></div>
<div style="left:835px;top:659px;width:1px;height:20px;background:#a6a6a6;"></div>
<div class="t" style="left:90.5px;top:662.84px;width:600px;font-size:12px;line-height:12px;font-weight:normal;color:#5a5a6a;font-family:'Liberation Sans', sans-serif;letter-spacing:0.2px;">Record:</div>
<svg style="position:absolute;left:135.5px;top:665px" width="7" height="8" viewBox="0 0 7 8"><rect x="0.5" y="0.5" width="1.4" height="7" fill="#3c3c3c"/><path d="M6.5 0.5 L2 4 L6.5 7.5Z" fill="#3c3c3c"/></svg>
<svg style="position:absolute;left:154px;top:665px" width="5" height="8" viewBox="0 0 5 8"><path d="M4.5 0.5 L0.5 4 L4.5 7.5Z" fill="#c8c8c8"/></svg>
<svg style="position:absolute;left:222.5px;top:665px" width="5" height="8" viewBox="0 0 5 8"><path d="M0.5 0.5 L4.5 4 L0.5 7.5Z" fill="#3c3c3c"/></svg>
<svg style="position:absolute;left:238.5px;top:665px" width="7" height="8" viewBox="0 0 7 8"><path d="M0.5 0.5 L5 4 L0.5 7.5Z" fill="#3c3c3c"/><rect x="5.1" y="0.5" width="1.4" height="7" fill="#3c3c3c"/></svg>
<svg style="position:absolute;left:252.5px;top:664px" width="14" height="10" viewBox="0 0 14 10"><path d="M0.5 1.5 L4.5 5 L0.5 8.5Z" fill="#3c3c3c"/><rect x="6.5" y="1" width="6.5" height="8" fill="none" stroke="#e8c040" stroke-width="1.3" stroke-dasharray="1.3 0.9"/></svg>
<div style="left:164.5px;top:661px;width:48.5px;height:15.5px;background:#fff;box-sizing:border-box;border:1px solid #c8c8c8;"></div>
<div class="t" style="left:166.5px;top:663.77px;width:600px;font-size:11.5px;line-height:11.5px;font-weight:normal;color:#1a1a2a;font-family:'Liberation Sans', sans-serif;">1 of 1</div>
<div style="left:271px;top:660px;width:1px;height:18px;background:#c4c4c4;"></div>
<svg style="position:absolute;left:280px;top:662px" width="15" height="15" viewBox="0 0 15 15"><path d="M0.5 0.5 H12 L7.5 6 V13 L5 11 V6 Z" fill="#b4b4b4"/><path d="M8 9 L13 14 M13 9 L8 14" stroke="#b4b4b4" stroke-width="1.3"/></svg>
<div class="t" style="left:298.5px;top:663.34px;width:600px;font-size:12px;line-height:12px;font-weight:normal;color:#a8a8a8;font-family:'Liberation Sans', sans-serif;">No Filter</div>
<div style="left:351px;top:660px;width:1px;height:18px;background:#c4c4c4;"></div>
<div style="left:357px;top:661px;width:69.5px;height:15.5px;background:#fff;box-sizing:border-box;border:1px solid #c8c8c8;"></div>
<div class="t" style="left:359.5px;top:663.77px;width:600px;font-size:11.5px;line-height:11.5px;font-weight:normal;color:#000;font-family:'Liberation Sans', sans-serif;">Search</div>
<div class="t" style="left:740.0px;text-align:right;top:476.57px;width:200px;font-size:13.5px;line-height:13.5px;font-weight:normal;color:#000;font-family:'Liberation Sans', sans-serif;">Needs Proof?</div>
<div style="left:949px;top:478.5px;width:13px;height:12.5px;background:#fff;box-sizing:border-box;border:1px solid #333;"></div>
<svg style="position:absolute;left:950px;top:480px" width="11" height="10" viewBox="0 0 11 10"><path d="M1.5 5 L4 8 L9.5 1.5" fill="none" stroke="#222" stroke-width="1.3"/></svg>
<div class="t" style="left:740.0px;text-align:right;top:504.57px;width:200px;font-size:13.5px;line-height:13.5px;font-weight:normal;color:#000;font-family:'Liberation Sans', sans-serif;">Proof Sent</div>
<div style="left:944.5px;top:503px;width:66.5px;height:20.5px;background:#fff;box-sizing:border-box;border:1px solid #a6a6a6;"></div>
<div style="left:993px;top:503px;width:18px;height:20.5px;background:#e6e6e6;box-sizing:border-box;border:2px solid #b4b4b4;"><svg width="9" height="6" viewBox="0 0 9 6" style="position:absolute;left:50%;top:50%;margin-left:-4.5px;margin-top:-3px"><path d="M0.5 0.8 L4.5 4.8 L8.5 0.8" fill="none" stroke="#555" stroke-width="1.1"/></svg></div>
<div class="t" style="left:947.5px;top:506.07px;width:600px;font-size:13.5px;line-height:13.5px;font-weight:normal;color:#000;font-family:'Liberation Sans', sans-serif;">SS</div>
<div class="t" style="left:740.0px;text-align:right;top:532.57px;width:200px;font-size:13.5px;line-height:13.5px;font-weight:normal;color:#000;font-family:'Liberation Sans', sans-serif;">Cust Approved</div>
<div style="left:944.5px;top:530.5px;width:86.0px;height:21.0px;background:#fff;box-sizing:border-box;border:1px solid #a6a6a6;"></div>
<div class="t" style="left:740.0px;text-align:right;top:560.57px;width:200px;font-size:13.5px;line-height:13.5px;font-weight:normal;color:#000;font-family:'Liberation Sans', sans-serif;">Proofed In</div>
<div class="t" style="left:740.0px;text-align:right;top:578.57px;width:200px;font-size:13.5px;line-height:13.5px;font-weight:normal;color:#000;font-family:'Liberation Sans', sans-serif;">House</div>
<div style="left:944.5px;top:558.5px;width:68.0px;height:21.0px;background:#fff;box-sizing:border-box;border:1px solid #a6a6a6;"></div>
<div style="left:994.5px;top:558.5px;width:18.0px;height:21.0px;background:#e6e6e6;box-sizing:border-box;border:2px solid #b4b4b4;"><svg width="9" height="6" viewBox="0 0 9 6" style="position:absolute;left:50%;top:50%;margin-left:-4.5px;margin-top:-3px"><path d="M0.5 0.8 L4.5 4.8 L8.5 0.8" fill="none" stroke="#555" stroke-width="1.1"/></svg></div>
<div style="left:860.5px;top:630.5px;width:156.5px;height:20.0px;background:#fde9d9;box-sizing:border-box;border:1px solid #9bb7d9;border-radius:3px;"></div>
<div class="t" style="left:860.5px;text-align:center;top:634.00px;width:156.5px;font-size:13px;line-height:13px;font-weight:normal;color:#1a1a1a;font-family:'Liberation Sans', sans-serif;">Print Parts List</div>
<div style="left:860.5px;top:658.5px;width:156.5px;height:20.5px;background:#fde9d9;box-sizing:border-box;border:1px solid #9bb7d9;border-radius:3px;"></div>
<div class="t" style="left:860.5px;text-align:center;top:662.25px;width:156.5px;font-size:13px;line-height:13px;font-weight:normal;color:#1a1a1a;font-family:'Liberation Sans', sans-serif;">Print Parts Out of Stock</div>
<div style="left:860.5px;top:695px;width:156.5px;height:20px;background:#fde9d9;box-sizing:border-box;border:1px solid #9bb7d9;border-radius:3px;"></div>
<div class="t" style="left:860.5px;text-align:center;top:698.50px;width:156.5px;font-size:13px;line-height:13px;font-weight:normal;color:#1a1a1a;font-family:'Liberation Sans', sans-serif;">Print Worksheet</div>
<div style="left:860.5px;top:723px;width:156.5px;height:20px;background:#fde9d9;box-sizing:border-box;border:1px solid #9bb7d9;border-radius:3px;"></div>
<div class="t" style="left:860.5px;text-align:center;top:726.50px;width:156.5px;font-size:13px;line-height:13px;font-weight:normal;color:#1a1a1a;font-family:'Liberation Sans', sans-serif;">Print Invoice</div>
<div style="left:860.5px;top:751px;width:156.5px;height:19.5px;background:#fde9d9;box-sizing:border-box;border:1px solid #9bb7d9;border-radius:3px;"></div>
<div class="t" style="left:860.5px;text-align:center;top:754.25px;width:156.5px;font-size:13px;line-height:13px;font-weight:normal;color:#1a1a1a;font-family:'Liberation Sans', sans-serif;">Print Packing Slip</div>
<div class="t" style="left:-20.5px;text-align:right;top:726.07px;width:200px;font-size:13.5px;line-height:13.5px;font-weight:normal;color:#000;font-family:'Liberation Sans', sans-serif;">Payment Terms</div>
<div style="left:184.5px;top:724px;width:228.0px;height:20.5px;background:#fff;box-sizing:border-box;border:1px solid #a6a6a6;"></div>
<div style="left:394.5px;top:724px;width:18.0px;height:20.5px;background:#e6e6e6;box-sizing:border-box;border:2px solid #b4b4b4;"><svg width="9" height="6" viewBox="0 0 9 6" style="position:absolute;left:50%;top:50%;margin-left:-4.5px;margin-top:-3px"><path d="M0.5 0.8 L4.5 4.8 L8.5 0.8" fill="none" stroke="#555" stroke-width="1.1"/></svg></div>
<div class="t" style="left:187.5px;top:726.57px;width:600px;font-size:13.5px;line-height:13.5px;font-weight:normal;color:#000;font-family:'Liberation Sans', sans-serif;">Due on Receipt</div>
<div class="t" style="left:508.5px;text-align:right;top:697.00px;width:200px;font-size:13px;line-height:13px;font-weight:bold;color:#000;font-family:'Liberation Sans', sans-serif;">Subtotal</div>
<div style="left:712.5px;top:695px;width:104.0px;height:20.5px;background:#fff;box-sizing:border-box;border:1px solid #a6a6a6;"></div>
<div class="t" style="left:728.0px;text-align:right;top:697.57px;width:80px;font-size:13.5px;line-height:13.5px;font-weight:normal;color:#000;font-family:'Liberation Sans', sans-serif;">$67.00</div>
<div class="t" style="left:304.0px;text-align:right;top:724.57px;width:200px;font-size:13.5px;line-height:13.5px;font-weight:normal;color:#000;font-family:'Liberation Sans', sans-serif;">Sales Tax</div>
<div style="left:508px;top:723px;width:149px;height:20.5px;background:#fff;box-sizing:border-box;border:1px solid #a6a6a6;"></div>
<div style="left:639px;top:723px;width:18px;height:20.5px;background:#e6e6e6;box-sizing:border-box;border:2px solid #b4b4b4;"><svg width="9" height="6" viewBox="0 0 9 6" style="position:absolute;left:50%;top:50%;margin-left:-4.5px;margin-top:-3px"><path d="M0.5 0.8 L4.5 4.8 L8.5 0.8" fill="none" stroke="#555" stroke-width="1.1"/></svg></div>
<div style="left:664.5px;top:723.5px;width:44.0px;height:20.5px;background:#fff;box-sizing:border-box;border:1px solid #a6a6a6;"></div>
<div class="t" style="left:666.0px;text-align:right;top:726.57px;width:40px;font-size:13.5px;line-height:13.5px;font-weight:normal;color:#000;font-family:'Liberation Sans', sans-serif;">5.60%</div>
<div style="left:712.5px;top:723.5px;width:104.0px;height:20.5px;background:#fff;box-sizing:border-box;border:1px solid #a6a6a6;"></div>
<div class="t" style="left:728.0px;text-align:right;top:726.57px;width:80px;font-size:13.5px;line-height:13.5px;font-weight:normal;color:#000;font-family:'Liberation Sans', sans-serif;">$3.75</div>
<div class="t" style="left:304.5px;text-align:right;top:757.57px;width:200px;font-size:13.5px;line-height:13.5px;font-weight:normal;color:#000;font-family:'Liberation Sans', sans-serif;">Tax Exempt/Resale #</div>
<div style="left:508px;top:754.5px;width:120px;height:20.5px;background:#fff;box-sizing:border-box;border:1px solid #a6a6a6;"></div>
<div class="t" style="left:508.5px;text-align:right;top:758.00px;width:200px;font-size:13px;line-height:13px;font-weight:bold;color:#000;font-family:'Liberation Sans', sans-serif;">Grand Total</div>
<div style="left:712.5px;top:754.5px;width:104.0px;height:20.5px;background:#fff;box-sizing:border-box;border:1px solid #a6a6a6;"></div>
<div class="t" style="left:728.0px;text-align:right;top:757.57px;width:80px;font-size:13.5px;line-height:13.5px;font-weight:normal;color:#000;font-family:'Liberation Sans', sans-serif;">$70.75</div>
<div style="left:58px;top:775px;width:996px;height:19px;background:linear-gradient(#f6f6f6,#f0f0f0 45%,#e4e4e4 55%,#e8e8e8);box-sizing:border-box;border-top:1px solid #b0b0b0;border-bottom:1px solid #9a9a9a;"></div>
<div class="t" style="left:64.0px;top:779.34px;width:600px;font-size:12px;line-height:12px;font-weight:normal;color:#5a5a6a;font-family:'Liberation Sans', sans-serif;">Record:</div>
<svg style="position:absolute;left:109px;top:781px" width="7" height="8" viewBox="0 0 7 8"><rect x="0.5" y="0.5" width="1.4" height="7" fill="#3c3c3c"/><path d="M6.5 0.5 L2 4 L6.5 7.5Z" fill="#3c3c3c"/></svg>
<svg style="position:absolute;left:127px;top:781px" width="5" height="8" viewBox="0 0 5 8"><path d="M4.5 0.5 L0.5 4 L4.5 7.5Z" fill="#c8c8c8"/></svg>
<svg style="position:absolute;left:196px;top:781px" width="5" height="8" viewBox="0 0 5 8"><path d="M0.5 0.5 L4.5 4 L0.5 7.5Z" fill="#c8c8c8"/></svg>
<svg style="position:absolute;left:212px;top:781px" width="7" height="8" viewBox="0 0 7 8"><path d="M0.5 0.5 L5 4 L0.5 7.5Z" fill="#3c3c3c"/><rect x="5.1" y="0.5" width="1.4" height="7" fill="#3c3c3c"/></svg>
<svg style="position:absolute;left:225px;top:780px" width="14" height="10" viewBox="0 0 14 10"><path d="M0.5 1.5 L4.5 5 L0.5 8.5Z" fill="#c8c8c8"/><rect x="6.5" y="1" width="6.5" height="8" fill="none" stroke="#efe6b8" stroke-width="1.3" stroke-dasharray="1.3 0.9"/></svg>
<div style="left:137.5px;top:777.5px;width:48.5px;height:15.0px;background:#fff;box-sizing:border-box;border:1px solid #c8c8c8;"></div>
<div class="t" style="left:139.5px;top:779.77px;width:600px;font-size:11.5px;line-height:11.5px;font-weight:normal;color:#1a1a2a;font-family:'Liberation Sans', sans-serif;">1 of 1</div>
<div style="left:244.5px;top:776px;width:1.0px;height:18px;background:#c4c4c4;"></div>
<div style="left:245.5px;top:776px;width:72.5px;height:18px;background:linear-gradient(#fbd3a6,#f6a95e 50%,#f09848 52%,#f7c08a);"></div>
<svg style="position:absolute;left:252px;top:778px" width="15" height="15" viewBox="0 0 15 15"><path d="M0.5 0.5 H14.5 L9 6.5 V14 L6 14 V6.5 Z" fill="#555"/></svg>
<div class="t" style="left:271.5px;top:779.77px;width:600px;font-size:11.5px;line-height:11.5px;font-weight:bold;color:#222;font-family:'Liberation Sans', sans-serif;">Filtered</div>
<div style="left:318px;top:776px;width:1px;height:18px;background:#c4c4c4;"></div>
<div style="left:324.5px;top:777.5px;width:69.0px;height:15.0px;background:#fff;box-sizing:border-box;border:1px solid #c8c8c8;"></div>
<div class="t" style="left:326.5px;top:779.77px;width:600px;font-size:11.5px;line-height:11.5px;font-weight:normal;color:#000;font-family:'Liberation Sans', sans-serif;">Search</div>
<div style="left:375px;top:158px;width:78px;height:21px;background:rgba(255,255,255,0.8);border-radius:50%;filter:blur(2.5px);"></div>
<div style="left:379px;top:163px;width:58px;height:12px;background:repeating-linear-gradient(to bottom,rgba(70,70,70,0.85) 0px,rgba(120,120,120,0.595) 1.5px,rgba(175,175,175,0.425) 3px);-webkit-mask-image:linear-gradient(to right,#000,rgba(0,0,0,0.85) 55%,transparent);filter:blur(0.55px);"></div>
<div style="left:362px;top:188px;width:20px;height:13px;background:repeating-linear-gradient(to bottom,rgba(70,70,70,0.85) 0px,rgba(120,120,120,0.595) 1.5px,rgba(175,175,175,0.425) 3px);-webkit-mask-image:linear-gradient(to right,#000,rgba(0,0,0,0.85) 55%,transparent);filter:blur(0.55px);"></div>
<div style="left:454px;top:191px;width:36px;height:11px;background:repeating-linear-gradient(to bottom,rgba(70,70,70,0.85) 0px,rgba(120,120,120,0.595) 1.5px,rgba(175,175,175,0.425) 3px);-webkit-mask-image:linear-gradient(to right,#000,rgba(0,0,0,0.85) 55%,transparent);filter:blur(0.55px);"></div>
<div style="left:322px;top:209.5px;width:169px;height:20.5px;background:rgba(255,255,255,0.8);border-radius:50%;filter:blur(2.5px);"></div>
<div style="left:326px;top:214.5px;width:149px;height:11.5px;background:repeating-linear-gradient(to bottom,rgba(70,70,70,0.85) 0px,rgba(120,120,120,0.595) 1.5px,rgba(175,175,175,0.425) 3px);-webkit-mask-image:linear-gradient(to right,#000,rgba(0,0,0,0.85) 55%,transparent);filter:blur(0.55px);"></div>
<div style="left:610px;top:192px;width:87px;height:9px;box-sizing:border-box;border-top:1.5px solid #555;border-bottom:1.5px solid #444;background:linear-gradient(to right,#bbb,#ddd 40%,#c8c8d0 70%,#e8e8e8);filter:blur(0.5px);-webkit-mask-image:linear-gradient(to right,#000 80%,transparent);"></div>
<div style="left:881px;top:157.5px;width:113px;height:22.0px;background:rgba(255,255,255,0.8);border-radius:50%;filter:blur(2.5px);"></div>
<div style="left:885px;top:162.5px;width:93px;height:13.0px;background:repeating-linear-gradient(to bottom,rgba(70,70,70,0.85) 0px,rgba(120,120,120,0.595) 1.5px,rgba(175,175,175,0.425) 3px);-webkit-mask-image:linear-gradient(to right,#000,rgba(0,0,0,0.85) 55%,transparent);filter:blur(0.55px);"></div>
<div style="left:170px;top:282px;width:78px;height:21px;background:rgba(255,255,255,0.8);border-radius:50%;filter:blur(2.5px);"></div>
<div style="left:174px;top:287px;width:58px;height:12px;background:repeating-linear-gradient(to bottom,rgba(70,70,70,0.85) 0px,rgba(120,120,120,0.595) 1.5px,rgba(175,175,175,0.425) 3px);-webkit-mask-image:linear-gradient(to right,#000,rgba(0,0,0,0.85) 55%,transparent);filter:blur(0.55px);"></div>
<div style="left:506px;top:723px;width:95px;height:21px;background:rgba(255,255,255,0.8);border-radius:50%;filter:blur(2.5px);"></div>
<div style="left:510px;top:728px;width:75px;height:12px;background:repeating-linear-gradient(to bottom,rgba(70,70,70,0.85) 0px,rgba(120,120,120,0.595) 1.5px,rgba(175,175,175,0.425) 3px);-webkit-mask-image:linear-gradient(to right,#000,rgba(0,0,0,0.85) 55%,transparent);filter:blur(0.55px);"></div>
<div style="left:478px;top:136px;width:22px;height:14px;background:repeating-linear-gradient(to bottom,rgba(70,70,70,0.85) 0px,rgba(120,120,120,0.595) 1.5px,rgba(175,175,175,0.425) 3px);-webkit-mask-image:linear-gradient(to right,#000,rgba(0,0,0,0.85) 55%,transparent);filter:blur(0.55px);"></div>
<div class="t" style="left:378.0px;top:161.07px;width:600px;font-size:13.5px;line-height:13.5px;font-weight:normal;color:rgba(30,30,30,0.6);font-family:'Liberation Sans', sans-serif;filter:blur(0.5px);">B</div>
<div class="t" style="left:361.5px;top:189.07px;width:600px;font-size:13.5px;line-height:13.5px;font-weight:normal;color:rgba(30,30,30,0.6);font-family:'Liberation Sans', sans-serif;filter:blur(0.5px);">C</div>
<div class="t" style="left:454.0px;top:189.07px;width:600px;font-size:13.5px;line-height:13.5px;font-weight:normal;color:rgba(30,30,30,0.6);font-family:'Liberation Sans', sans-serif;filter:blur(0.5px);">E</div>
<div class="t" style="left:885.0px;top:161.07px;width:600px;font-size:13.5px;line-height:13.5px;font-weight:normal;color:rgba(30,30,30,0.6);font-family:'Liberation Sans', sans-serif;filter:blur(0.5px);">T</div>
<div class="t" style="left:173.5px;top:285.07px;width:600px;font-size:13.5px;line-height:13.5px;font-weight:normal;color:rgba(30,30,30,0.6);font-family:'Liberation Sans', sans-serif;filter:blur(0.5px);">E</div>
<div class="t" style="left:510.0px;top:726.07px;width:600px;font-size:13.5px;line-height:13.5px;font-weight:normal;color:rgba(30,30,30,0.6);font-family:'Liberation Sans', sans-serif;filter:blur(0.5px);">W</div>
</body></html>
